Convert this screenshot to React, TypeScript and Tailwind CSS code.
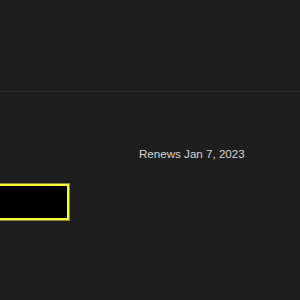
export default function App() {
  return (
    <div
      className="w-[300px] h-[300px] overflow-hidden bg-[#1e1e1e] text-[#d4d4d4]"
      style={{ fontFamily: '"Liberation Sans", Arial, sans-serif' }}
    >
      {/* Header area */}
      <div className="h-[92px] border-b border-[#2e2e2e]" />

      {/* Subscription row */}
      <div className="pl-[139px] pt-[54px] text-[11.6px] leading-[16px]">
        Renews Jan 7, 2023
      </div>

      {/* Focused field */}
      <div className="mt-[22px] -ml-[20px] w-[89px] h-[36px] bg-black border-2 border-[#fafa3c] outline outline-1 outline-[#8a8a3a]" />
    </div>
  );
}
